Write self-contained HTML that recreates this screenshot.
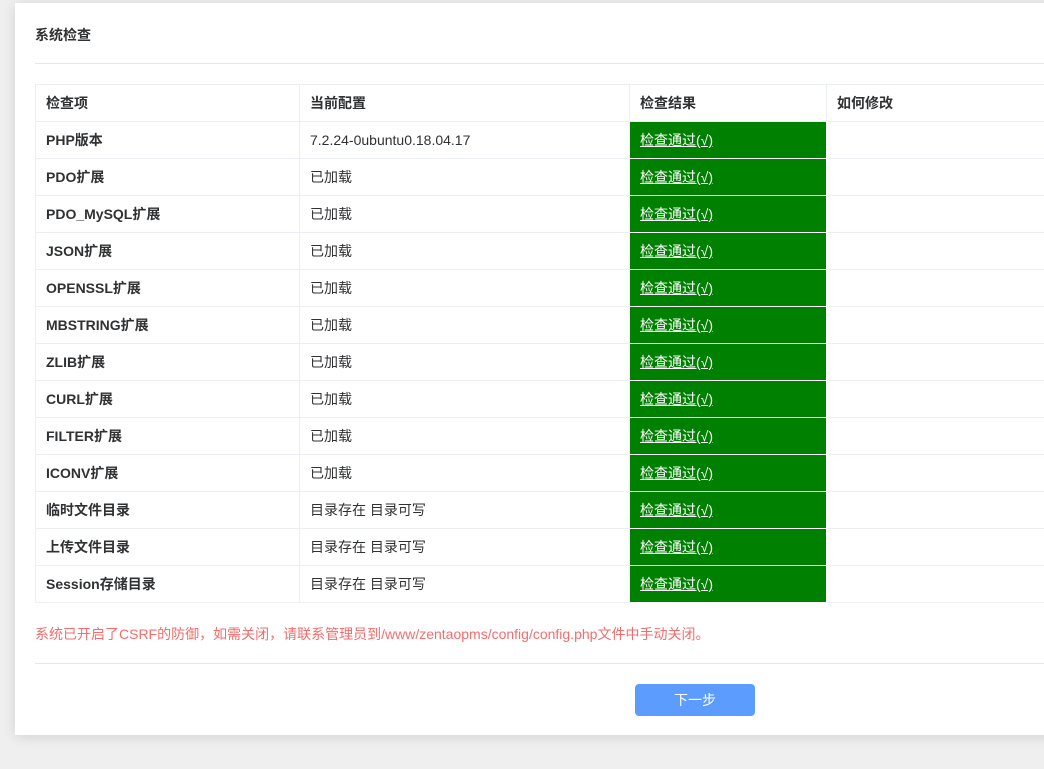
<!DOCTYPE html>
<html><head><meta charset="utf-8"><style>
body{margin:0;background:#efefef;font-family:"Liberation Sans","Noto Sans CJK SC",sans-serif;width:1044px;height:769px;overflow:hidden;position:relative}
.card{position:absolute;left:15px;top:3px;width:1100px;height:732px;background:#fff;box-shadow:0 2px 12px rgba(0,0,0,.12)}
.title{position:absolute;left:20px;top:22px;font-size:14px;font-weight:bold;color:#303133}
.hr{position:absolute;left:20px;right:0;height:1px;background:#e4e7ed}
table{position:absolute;left:20px;top:81px;border-collapse:collapse;font-size:14px;color:#303133}
td{height:37px;border:1px solid #ebeef5;padding:0 0 0 10px;box-sizing:border-box}
tr:first-child td{font-weight:bold;color:#303133}
td.n{font-weight:bold}
td.g{background:#008000;color:#fff;text-decoration:underline;border-color:#fff}
.red{position:absolute;left:20px;top:621px;font-size:14px;color:#f56c6c}
.btn{position:absolute;left:620px;top:681px;width:120px;height:32px;background:#5c9cff;border-radius:4px;color:#fff;font-size:14px;text-align:center;line-height:32px}
</style></head><body><div class="card">
<div class="title">系统检查</div>
<div class="hr" style="top:60px"></div>
<table>
<colgroup><col style="width:264px"><col style="width:330px"><col style="width:197px"><col style="width:260px"></colgroup>
<tr><td>检查项</td><td>当前配置</td><td>检查结果</td><td>如何修改</td></tr>
<tr><td class="n">PHP版本</td><td>7.2.24-0ubuntu0.18.04.17</td><td class="g">检查通过(√)</td><td></td></tr>
<tr><td class="n">PDO扩展</td><td>已加载</td><td class="g">检查通过(√)</td><td></td></tr>
<tr><td class="n">PDO_MySQL扩展</td><td>已加载</td><td class="g">检查通过(√)</td><td></td></tr>
<tr><td class="n">JSON扩展</td><td>已加载</td><td class="g">检查通过(√)</td><td></td></tr>
<tr><td class="n">OPENSSL扩展</td><td>已加载</td><td class="g">检查通过(√)</td><td></td></tr>
<tr><td class="n">MBSTRING扩展</td><td>已加载</td><td class="g">检查通过(√)</td><td></td></tr>
<tr><td class="n">ZLIB扩展</td><td>已加载</td><td class="g">检查通过(√)</td><td></td></tr>
<tr><td class="n">CURL扩展</td><td>已加载</td><td class="g">检查通过(√)</td><td></td></tr>
<tr><td class="n">FILTER扩展</td><td>已加载</td><td class="g">检查通过(√)</td><td></td></tr>
<tr><td class="n">ICONV扩展</td><td>已加载</td><td class="g">检查通过(√)</td><td></td></tr>
<tr><td class="n">临时文件目录</td><td>目录存在 目录可写</td><td class="g">检查通过(√)</td><td></td></tr>
<tr><td class="n">上传文件目录</td><td>目录存在 目录可写</td><td class="g">检查通过(√)</td><td></td></tr>
<tr><td class="n">Session存储目录</td><td>目录存在 目录可写</td><td class="g">检查通过(√)</td><td></td></tr>
</table>
<div class="red">系统已开启了CSRF的防御，如需关闭，请联系管理员到/www/zentaopms/config/config.php文件中手动关闭。</div>
<div class="hr" style="top:660px"></div>
<div class="btn">下一步</div>
</div></body></html>
